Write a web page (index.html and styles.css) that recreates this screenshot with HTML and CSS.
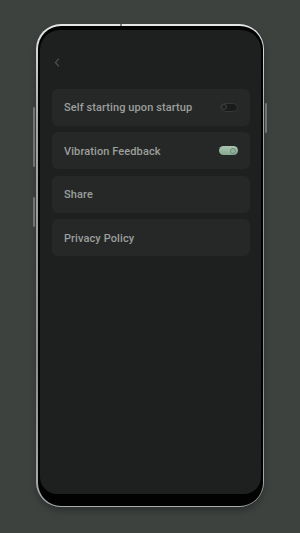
FILE: index.html
```html
<!DOCTYPE html>
<html>
<head>
<meta charset="utf-8">
<link rel="stylesheet" href="styles.css">
</head>
<body>
<div class="stage">
  <div class="phone">
    <span class="btn btn-l1"></span>
    <span class="btn btn-l2"></span>
    <span class="btn btn-r1"></span>
    <span class="top-mark"></span>
    <div class="bezel">
      <div class="screen">
        <div class="topbar">
          <svg class="back" width="6" height="9" viewBox="0 0 6 9"><path d="M4.5 1 L1.5 4.5 L4.5 8" fill="none" stroke="#4b4e4c" stroke-width="1.2" stroke-linecap="round" stroke-linejoin="round"/></svg>
        </div>
        <div class="list">
          <div class="card">
            <span class="label">Self starting upon startup</span>
            <span class="toggle toggle-off"><span class="knob"></span></span>
          </div>
          <div class="card">
            <span class="label">Vibration Feedback</span>
            <span class="toggle toggle-on"><span class="knob"></span></span>
          </div>
          <div class="card"><span class="label">Share</span></div>
          <div class="card"><span class="label">Privacy Policy</span></div>
        </div>
      </div>
    </div>
  </div>
</div>
</body>
</html>
```
FILE: styles.css
```css
html, body {
  margin: 0;
  padding: 0;
  background: #3d423f;
}
.stage {
  width: 300px;
  height: 533px;
  padding-top: 24px;
  box-sizing: border-box;
}
.phone {
  position: relative;
  margin-left: 36px;
  width: 228px;
  height: 483px;
  box-sizing: border-box;
  border-radius: 25px;
  padding: 1.5px;
  background: linear-gradient(180deg, #e4e6e7 0%, #a2a6a8 20%, #8a8e90 70%, #a9adaf 100%);
  box-shadow: 0 4px 6px rgba(0,0,0,0.25);
}
.bezel {
  height: 100%;
  box-sizing: border-box;
  border-radius: 23px;
  background: #020202;
  padding: 4px 2px 12px 2.5px;
}
.screen {
  height: 100%;
  box-sizing: border-box;
  border-radius: 20px 20px 17px 17px;
  background: #1e201f;
  padding: 0 11px 0 12px;
  font-family: Roboto, "Noto Sans", sans-serif;
}
.topbar {
  height: 59px;
  box-sizing: border-box;
  padding: 28px 0 0 2px;
}
.back {
  display: block;
}
.list {
  display: flex;
  flex-direction: column;
  gap: 6.5px;
}
.card {
  height: 37px;
  border-radius: 6px;
  background: #262827;
  display: flex;
  align-items: center;
  justify-content: space-between;
  padding: 0 12px;
}
.label {
  color: #9c9f9d;
  font-size: 11px;
  font-weight: 500;
  letter-spacing: 0.1px;
  margin-top: 1px;
}
.toggle {
  position: relative;
  width: 18px;
  height: 9px;
  border-radius: 5px;
  box-sizing: border-box;
}
.toggle-off {
  background: #1a1c1b;
  border: 1px solid #353736;
}
.toggle-off .knob {
  position: absolute;
  left: 0.5px;
  top: 0.5px;
  width: 6px;
  height: 6px;
  border-radius: 50%;
  border: 1px solid #414342;
  box-sizing: border-box;
  background: #1d1f1e;
}
.toggle-on {
  width: 19px;
  background: linear-gradient(180deg, #a9c4b1 0%, #87a890 100%);
}
.toggle-on .knob {
  position: absolute;
  right: 1.5px;
  top: 1.5px;
  width: 6px;
  height: 6px;
  border-radius: 50%;
  border: 1px solid #6d8d77;
  box-sizing: border-box;
  background: #93b39c;
}
.btn {
  position: absolute;
  width: 2px;
  background: #6f7472;
  border-radius: 1px;
}
.btn-l1 { left: -3px; top: 83px; height: 60px; }
.btn-l2 { left: -3px; top: 173px; height: 30px; }
.btn-r1 { right: -3px; top: 79px; height: 30px; }
.top-mark {
  position: absolute;
  left: 84px;
  top: 0;
  width: 2px;
  height: 2px;
  background: #7d8280;
}
```
